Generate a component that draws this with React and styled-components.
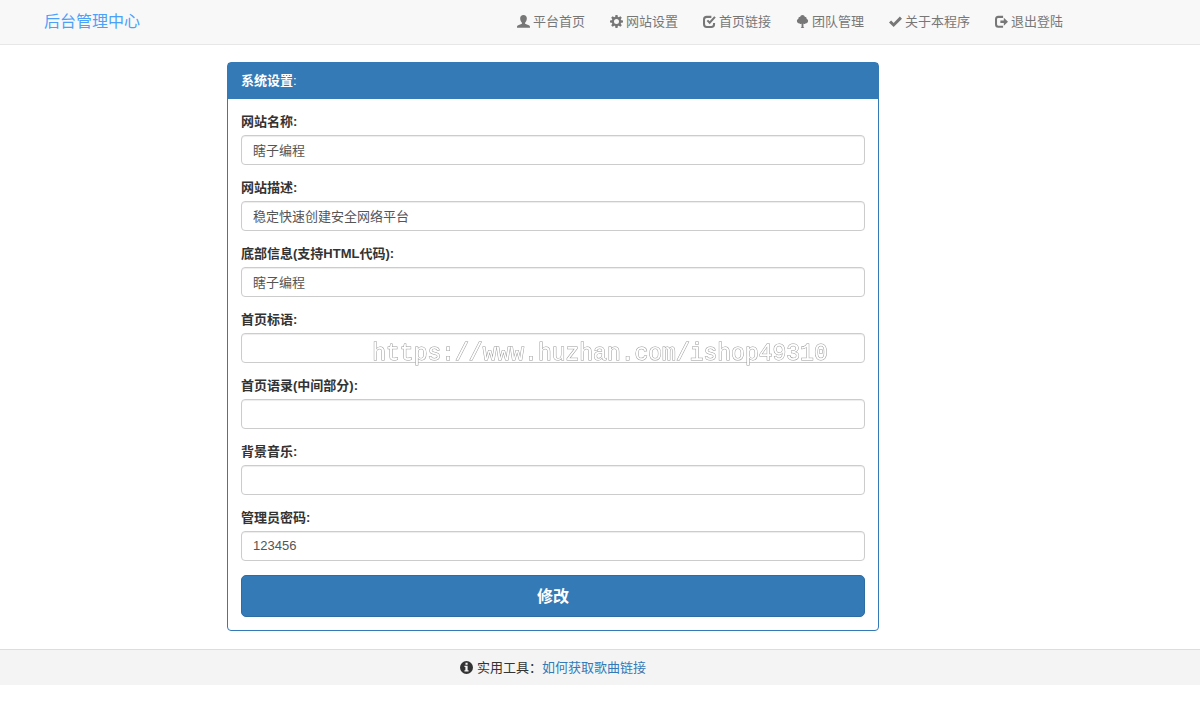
import React, { useState } from 'react';
import styled, { createGlobalStyle } from 'styled-components';

const GlobalStyle = createGlobalStyle`
    * {
        box-sizing: border-box;
    }

    body {
        margin: 0;
        background: #fff;
        color: #333;
        font-family: "Liberation Sans", "Noto Sans CJK SC", sans-serif;
        font-size: 13px;
        line-height: 18px;
    }
`;

const Navbar = styled.header`
    padding: 0 94px 0 0;
    background: #f8f8f8;
    border-bottom: 1px solid #e7e7e7;
`;

const NavContainer = styled.div`
    display: flex;
    flex-wrap: wrap;
    justify-content: space-between;
    align-items: center;
    max-width: 1046px;
    min-height: 44px;
    margin: 0 auto;
    padding: 0 0 0 14px;
`;

const Brand = styled.a`
    font-size: 16px;
    color: #4ba1f8;
    text-decoration: none;
`;

const NavList = styled.nav`
    display: flex;
    flex-wrap: wrap;
`;

const NavLink = styled.a`
    display: flex;
    align-items: center;
    gap: 3px;
    padding: 0 13px 0 12px;
    color: #777;
    text-decoration: none;
`;

const Icon = styled.svg`
    display: block;
    flex: none;
    width: 13px;
    height: 13px;
    margin-bottom: 2px;
    fill: currentColor;
`;

const Main = styled.main`
    padding: 17px 94px 18px 0;
`;

const Panel = styled.section`
    max-width: 652px;
    margin: 0 auto;
    border: 1px solid #337ab7;
    border-radius: 4px;
`;

const PanelHeading = styled.div`
    padding: 9px 13px;
    background: #337ab7;
    color: #fff;
`;

const PanelBody = styled.form`
    padding: 14px 13px 13px;
`;

const FormGroup = styled.div`
    margin-bottom: 14px;
`;

const Label = styled.label`
    display: block;
    margin-bottom: 4px;
    font-weight: bold;
`;

const Input = styled.input`
    display: block;
    width: 100%;
    height: 30px;
    padding: 4px 11px 6px;
    border: 1px solid #ccc;
    border-radius: 4px;
    background: #fff;
    box-shadow: inset 0 1px 1px rgba(0, 0, 0, 0.075);
    color: #555;
    font-family: inherit;
    font-size: 13px;
`;

const SubmitButton = styled.button`
    display: block;
    width: 100%;
    height: 42px;
    padding: 0 14px 2px;
    border: 1px solid #2e6da4;
    border-radius: 5px;
    background: #337ab7;
    color: #fff;
    font-family: inherit;
    font-size: 16px;
    font-weight: bold;
    cursor: pointer;
`;

const Footer = styled.footer`
    display: flex;
    justify-content: center;
    align-items: center;
    gap: 4px;
    padding: 9px 94px 8px 0;
    background: #f4f4f4;
    border-top: 1px solid #ddd;
`;

const FooterLink = styled.a`
    color: #337ab7;
    text-decoration: none;
`;

const Watermark = styled.div`
    position: fixed;
    top: 49%;
    left: 0;
    right: 0;
    font-family: "Liberation Mono", monospace;
    font-size: 23px;
    text-align: center;
    color: #fff;
    -webkit-text-stroke: 1px #999;
    paint-order: stroke fill;
    pointer-events: none;
`;

const UserIcon = () => (
    <Icon viewBox="0 0 14 14">
        <path d="M7 0C4.700 0 3.400 1.500 3.400 3.600c0 1.900.7 3.700 1.900 4.700v1.100L1.300 11C.4 11.400 0 12 0 13v.6h14V13c0-1-.4-1.600-1.300-2L8.700 9.400V8.300c1.200-1 1.900-2.800 1.900-4.700C10.600 1.500 9.300 0 7 0z" />
    </Icon>
);

const CogIcon = () => (
    <Icon viewBox="0 0 14 14">
        {[0, 45, 90, 135].map((angle) => (
            <path key={angle} d="M5.900 0h2.200l.5 3h-3.200zM5.400 11h3.200l-.5 3H5.900z" transform={`rotate(${angle} 7 7)`} />
        ))}
        <circle cx="7" cy="7" r="3.900" fill="none" stroke="currentColor" strokeWidth="2.400" />
    </Icon>
);

const CheckIcon = () => (
    <Icon viewBox="0 0 14 14">
        <path d="M9 2H4Q1.100 2 1.100 4.800v5Q1.100 12.900 4 12.900h5Q11.900 12.900 11.900 9.900V8.500" fill="none" stroke="currentColor" strokeWidth="2.200" />
        <path d="M4.700 5.800l2.500 2.600 5.700-6.400" fill="none" stroke="currentColor" strokeWidth="2.200" />
    </Icon>
);

const TreeIcon = () => (
    <Icon viewBox="0 0 14 14">
        <path d="M7 0c1.300 0 2.200.8 2.400 1.900 1.400 0 2.200 1 2 2.200 1.100.5 1.700 1.400 1.600 2.400-.1 1.700-1.300 2.700-2.900 2.600-.6.600-1.400.700-2.100.4V13l1 1H5l1-1V9.500c-.7.300-1.500.2-2.100-.4C2.300 9.200 1.100 8.200 1 6.500c-.1-1 .5-1.900 1.600-2.400-.2-1.200.6-2.200 2-2.200C4.800.8 5.700 0 7 0z" />
    </Icon>
);

const OkIcon = () => (
    <Icon viewBox="0 0 14 14">
        <path d="M0 8.200l2.300-2.300 2.700 2.600L11.700 1.700 14 4 5 12.900z" />
    </Icon>
);

const LogOutIcon = () => (
    <Icon viewBox="0 0 14 14">
        <path d="M8.700 2H3.500Q1.100 2 1.100 4.500v5.500Q1.100 12.700 3.500 12.700h5.200" fill="none" stroke="currentColor" strokeWidth="2.200" />
        <path d="M5.800 5.900h3.700V3L14 7.200l-4.500 4.300V8.600H5.800z" />
    </Icon>
);

const InfoIcon = () => (
    <Icon viewBox="0 0 14 14">
        <path fillRule="evenodd" d="M7 0a7 7 0 1 0 0 14A7 7 0 0 0 7 0zM5.900 2h2.300v2H5.900zM4.800 5.200h3.400v4.700h1v1.300H4.800V9.900h1V6.500h-1z" />
    </Icon>
);

const navItems = [
    { text: '平台首页', icon: UserIcon },
    { text: '网站设置', icon: CogIcon },
    { text: '首页链接', icon: CheckIcon },
    { text: '团队管理', icon: TreeIcon },
    { text: '关于本程序', icon: OkIcon },
    { text: '退出登陆', icon: LogOutIcon },
];

const fields = [
    { name: 'title', label: '网站名称:' },
    { name: 'description', label: '网站描述:' },
    { name: 'footer', label: '底部信息(支持HTML代码):' },
    { name: 'slogan', label: '首页标语:' },
    { name: 'quote', label: '首页语录(中间部分):' },
    { name: 'music', label: '背景音乐:' },
    { name: 'password', label: '管理员密码:' },
];

const App = () => {
    const [values, setValues] = useState({
        title: '瞎子编程',
        description: '稳定快速创建安全网络平台',
        footer: '瞎子编程',
        slogan: '',
        quote: '',
        music: '',
        password: '123456',
    });

    const onChange = (e) => {
        setValues({ ...values, [e.target.name]: e.target.value });
    };

    return (
        <>
            <GlobalStyle />
            <Navbar>
                <NavContainer>
                    <Brand href="#">后台管理中心</Brand>
                    <NavList>
                        {navItems.map(({ text, icon: NavIcon }) => (
                            <NavLink href="#" key={text}>
                                <NavIcon />
                                {text}
                            </NavLink>
                        ))}
                    </NavList>
                </NavContainer>
            </Navbar>
            <Main>
                <Panel>
                    <PanelHeading>
                        <b>系统设置</b>:
                    </PanelHeading>
                    <PanelBody onSubmit={(e) => e.preventDefault()}>
                        {fields.map(({ name, label }) => (
                            <FormGroup key={name}>
                                <Label htmlFor={name}>{label}</Label>
                                <Input id={name} name={name} type="text" value={values[name]} onChange={onChange} />
                            </FormGroup>
                        ))}
                        <SubmitButton type="submit">修改</SubmitButton>
                    </PanelBody>
                </Panel>
            </Main>
            <Footer>
                <InfoIcon />
                <span>
                    实用工具：<FooterLink href="#">如何获取歌曲链接</FooterLink>
                </span>
            </Footer>
            <Watermark>https://www.huzhan.com/ishop49310</Watermark>
        </>
    );
};

export default App;
